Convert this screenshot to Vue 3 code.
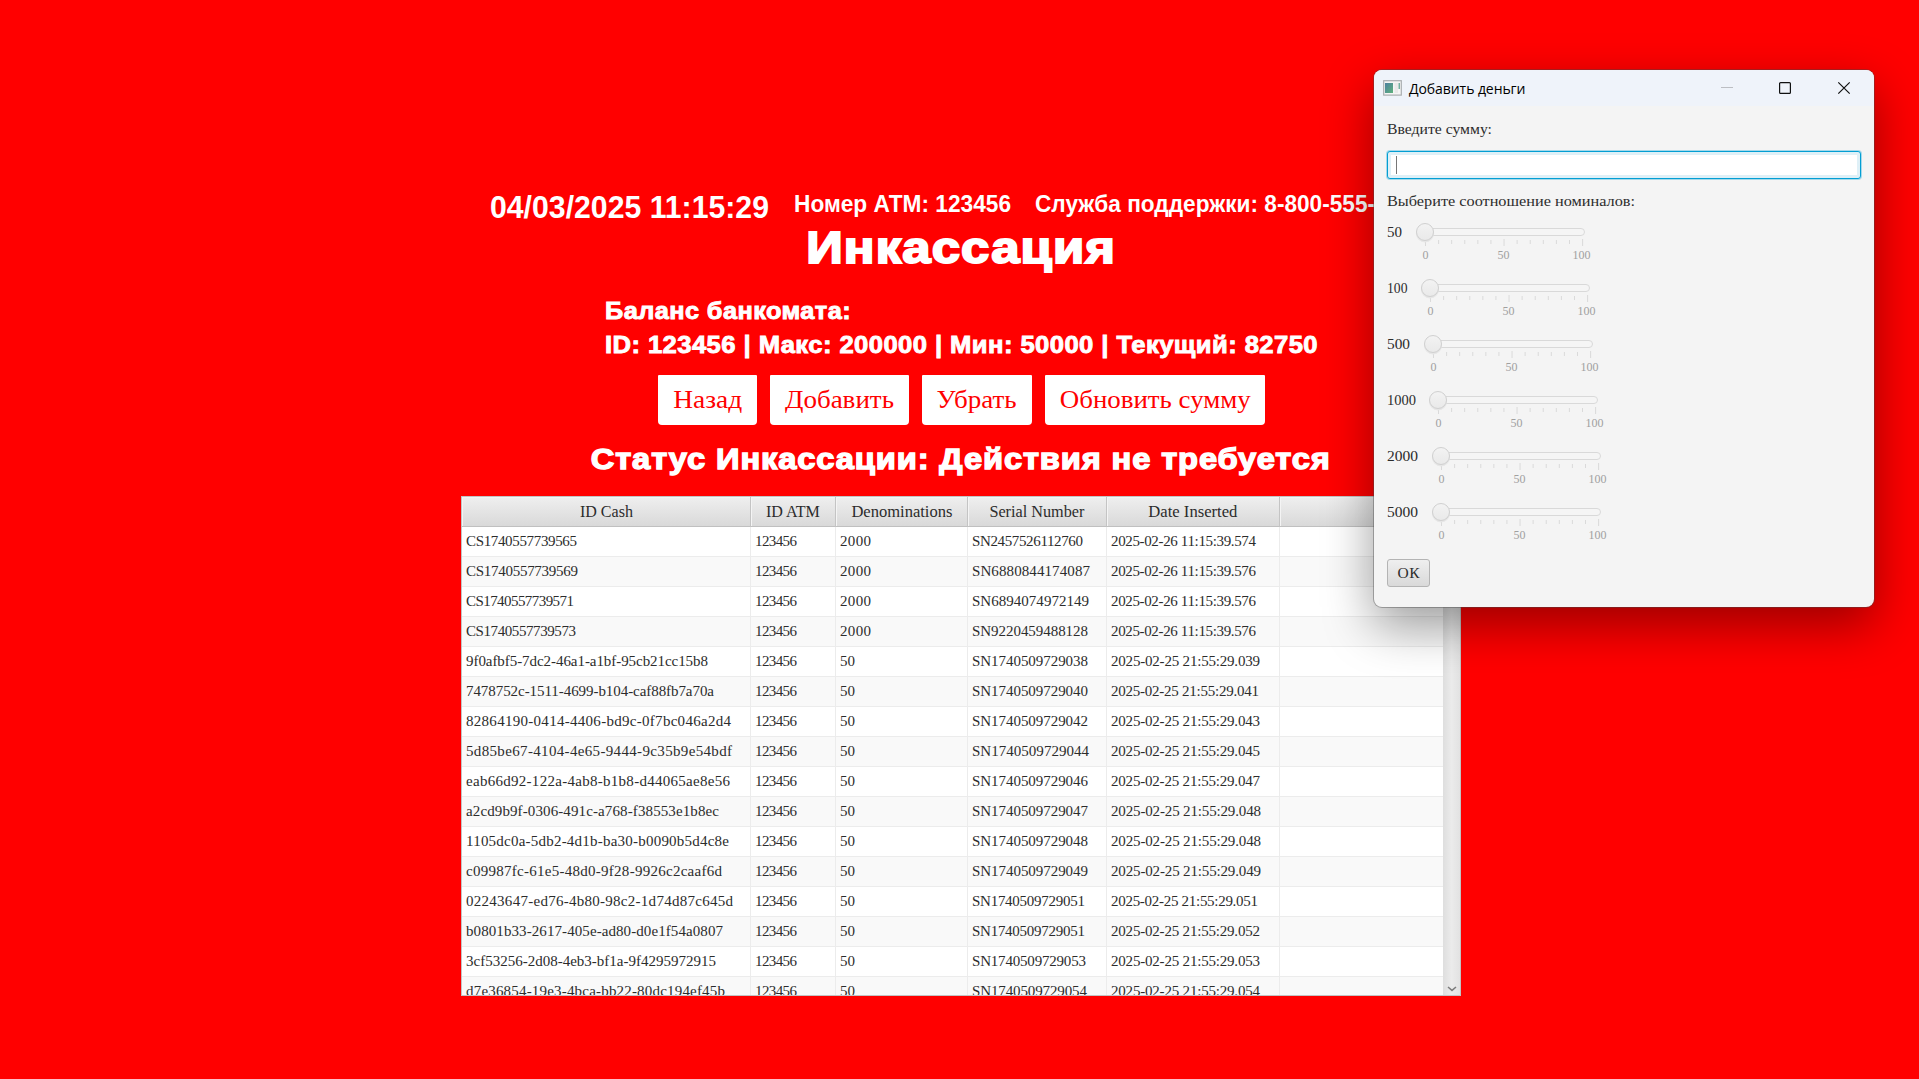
<script setup>
// Makes a run of text fill the given width: by tracking, or by
// horizontal scaling with the .stretch modifier.
const vFit = {
  mounted(el, { value, modifiers }) {
    const n = el.textContent.length
    if (!value || n < 2) return
    const w = el.getBoundingClientRect().width
    if (modifiers.stretch) {
      el.style.transform = `scaleX(${value / w})`
      return
    }
    el.style.letterSpacing = (value - w) / (n - 1) + 'px'
    el.style.marginRight = -(value - w) / (n - 1) + 'px'
  }
}

const actions = [
  { text: 'Назад', w: 99, t: 69 },
  { text: 'Добавить', w: 139, t: 109 },
  { text: 'Убрать', w: 110, t: 80 },
  { text: 'Обновить сумму', w: 220, t: 191 }
]

const columns = [
  { text: 'ID Cash', t: 53 },
  { text: 'ID ATM', t: 54 },
  { text: 'Denominations', t: 101 },
  { text: 'Serial Number', t: 95 },
  { text: 'Date Inserted', t: 89 },
  { text: '', t: 0 }
]

const rows = [
  ['CS1740557739565', 111, '2000', 'SN2457526112760', 111, '2025-02-26 11:15:39.574', 145],
  ['CS1740557739569', 112, '2000', 'SN6880844174087', 118, '2025-02-26 11:15:39.576', 145],
  ['CS1740557739571', 108, '2000', 'SN6894074972149', 117, '2025-02-26 11:15:39.576', 145],
  ['CS1740557739573', 110, '2000', 'SN9220459488128', 116, '2025-02-26 11:15:39.576', 145],
  ['9f0afbf5-7dc2-46a1-a1bf-95cb21cc15b8', 242, '50', 'SN1740509729038', 116, '2025-02-25 21:55:29.039', 149],
  ['7478752c-1511-4699-b104-caf88fb7a70a', 248, '50', 'SN1740509729040', 116, '2025-02-25 21:55:29.041', 148],
  ['82864190-0414-4406-bd9c-0f7bc046a2d4', 265, '50', 'SN1740509729042', 116, '2025-02-25 21:55:29.043', 149],
  ['5d85be67-4104-4e65-9444-9c35b9e54bdf', 266, '50', 'SN1740509729044', 117, '2025-02-25 21:55:29.045', 149],
  ['eab66d92-122a-4ab8-b1b8-d44065ae8e56', 264, '50', 'SN1740509729046', 116, '2025-02-25 21:55:29.047', 149],
  ['a2cd9b9f-0306-491c-a768-f38553e1b8ec', 253, '50', 'SN1740509729047', 116, '2025-02-25 21:55:29.048', 150],
  ['1105dc0a-5db2-4d1b-ba30-b0090b5d4c8e', 263, '50', 'SN1740509729048', 116, '2025-02-25 21:55:29.048', 150],
  ['c09987fc-61e5-48d0-9f28-9926c2caaf6d', 256, '50', 'SN1740509729049', 116, '2025-02-25 21:55:29.049', 150],
  ['02243647-ed76-4b80-98c2-1d74d87c645d', 267, '50', 'SN1740509729051', 113, '2025-02-25 21:55:29.051', 147],
  ['b0801b33-2617-405e-ad80-d0e1f54a0807', 257, '50', 'SN1740509729051', 113, '2025-02-25 21:55:29.052', 149],
  ['3cf53256-2d08-4eb3-bf1a-9f4295972915', 250, '50', 'SN1740509729053', 114, '2025-02-25 21:55:29.053', 149],
  ['d7e36854-19e3-4bca-bb22-80dc194ef45b', 259, '50', 'SN1740509729054', 115, '2025-02-25 21:55:29.054', 149]
]

const sliders = [
  { name: '50', w: 26, t: 15 },
  { name: '100', w: 31, t: 20.5 },
  { name: '500', w: 34, t: 23 },
  { name: '1000', w: 39, t: 29 },
  { name: '2000', w: 42, t: 31 },
  { name: '5000', w: 42, t: 31 }
]

const ticks = Array.from({ length: 13 }, (_, i) => ({
  x: 12.5 + i * 13.09,
  end: i % 6 === 0 ? 26 : 24,
  start: i % 6 === 0 ? 19 : 20
}))
</script>

<template>
  <div class="screen">
    <main class="atm">
      <div class="info">
        <span class="clock"><span v-fit.stretch="279">04/03/2025 11:15:29</span></span>
        <span class="number"><span v-fit.stretch="217">Номер АТМ: 123456</span></span>
        <span class="support"><span v-fit.stretch="340">Служба поддержки: 8-800-555-</span></span>
      </div>

      <h1><span v-fit.stretch="310">Инкассация</span></h1>

      <div class="balance">
        <div><span v-fit.stretch="246">Баланс банкомата:</span></div>
        <div><span v-fit.stretch="713">ID: 123456 | Макс: 200000 | Мин: 50000 | Текущий: 82750</span></div>
      </div>

      <div class="actions">
        <button v-for="a in actions" :key="a.text" :style="{ width: a.w + 'px' }">
          <span v-fit.stretch="a.t">{{ a.text }}</span>
        </button>
      </div>

      <h2><span v-fit.stretch="740">Статус Инкассации: Действия не требуется</span></h2>

      <div class="table">
        <div class="grid head">
          <div v-for="c in columns" :key="c.text"><span v-fit.stretch="c.t">{{ c.text }}</span></div>
        </div>
        <div class="view">
          <div class="rows">
            <div v-for="r in rows" :key="r[0]" class="grid row">
              <div><span v-fit="r[1]">{{ r[0] }}</span></div>
              <div><span v-fit="42">123456</span></div>
              <div><span v-fit="r[2] === '50' ? 15 : 31">{{ r[2] }}</span></div>
              <div><span v-fit="r[4]">{{ r[3] }}</span></div>
              <div><span v-fit="r[6]">{{ r[5] }}</span></div>
              <div></div>
            </div>
          </div>
          <div class="scrollbar">
            <svg width="10" height="6" viewBox="0 0 10 6">
              <path d="M1 1 L5 4.4 L9 1" fill="none" stroke="#7d7d7d" stroke-width="1.5" />
            </svg>
          </div>
        </div>
      </div>
    </main>

    <section class="dialog">
      <header class="titlebar">
        <svg class="app-icon" width="19" height="16" viewBox="0 0 19 16">
          <defs>
            <linearGradient id="pane" x1="0" y1="0" x2="1" y2="1">
              <stop offset="0" stop-color="#4c7fa0" />
              <stop offset="1" stop-color="#5fb27c" />
            </linearGradient>
          </defs>
          <rect x=".7" y=".7" width="17.6" height="14.4" fill="#f5f5f5" stroke="#a9adb0" stroke-width="1.2" />
          <rect x="2" y="3" width="8" height="10" fill="url(#pane)" />
          <rect x="11.5" y="3" width="3.5" height="10" fill="#e9e9e9" />
          <rect x="15.6" y="3" width="1.2" height="6" fill="#55a08c" />
        </svg>
        <span class="caption"><span v-fit="116.5">Добавить деньги</span></span>
        <svg class="controls" width="132" height="16" viewBox="0 0 132 16" fill="none">
          <path d="M1 7.5H13" stroke="#bcbec3" />
          <rect x="59.6" y="2.6" width="10.8" height="10.8" rx="1" stroke="#111" stroke-width="1.2" />
          <path d="M118.3 2.3 L129.7 13.7 M129.7 2.3 L118.3 13.7" stroke="#111" stroke-width="1.2" />
        </svg>
      </header>
      <div class="body">
        <div class="label"><span v-fit.stretch="105">Введите сумму:</span></div>
        <div class="field"><i class="caret"></i></div>
        <div class="label"><span v-fit.stretch="248">Выберите соотношение номиналов:</span></div>
        <div class="sliders">
          <div v-for="s in sliders" :key="s.name" class="slider">
            <div class="name" :style="{ width: s.w + 'px' }"><span v-fit.stretch="s.t">{{ s.name }}</span></div>
            <svg width="190" height="48" viewBox="0 0 190 48">
              <defs>
                <linearGradient id="thumb" x1="0" y1="0" x2="0" y2="1">
                  <stop offset="0" stop-color="#f3f3f3" />
                  <stop offset="1" stop-color="#e9e9e9" />
                </linearGradient>
              </defs>
              <rect x="9" y="8.5" width="162.5" height="7" rx="3.5" fill="#f5f5f5" stroke="#d9d9d9" />
              <path
                v-for="t in ticks"
                :key="t.x"
                :d="`M${t.x} ${t.start}V${t.end}`"
                stroke="#dadada"
              />
              <circle cx="12" cy="13.5" r="9" fill="#e6e6e6" />
              <circle cx="12" cy="12" r="8.5" fill="url(#thumb)" stroke="#d0d0d0" />
              <text x="12.5" y="38.5">0</text>
              <text x="90.5" y="38.5">50</text>
              <text x="168.5" y="38.5" textLength="18">100</text>
            </svg>
          </div>
        </div>
        <button class="ok"><span v-fit="22">ОК</span></button>
      </div>
    </section>
  </div>
</template>

<style>
body {
  margin: 0;
  background: #f00;
}
</style>

<style scoped>
.screen {
  position: relative;
  width: 1919px;
  height: 1079px;
  overflow: hidden;
  background: #f00;
  color: #2c2c2c;
  font: 15px 'Liberation Serif', serif;
}
.screen span {
  display: inline-block;
  white-space: nowrap;
}
.atm {
  width: 1000px;
  margin-left: 461px;
  padding-top: 190px;
}
.info {
  display: flex;
  align-items: flex-start;
  height: 30px;
  padding-left: 29px;
  color: #fff;
  font: bold 24px/28px 'Liberation Sans', Arial, sans-serif;
}
.info span,
.balance span,
.label span,
.name span {
  transform-origin: left;
}
.clock {
  width: 304px;
  font-size: 31px;
  line-height: 35px;
}
.number {
  width: 241px;
}
h1,
h2,
.balance {
  color: #fff;
  font-family: 'Liberation Sans', Arial, sans-serif;
  font-weight: bold;
}
h1 {
  margin: 0;
  font-size: 45px;
  line-height: 56px;
  height: 54px;
  text-align: center;
  letter-spacing: 1px;
  -webkit-text-stroke: 2px #fff;
}
.balance {
  margin: 20px 0 13px 144px;
  font-size: 24px;
  line-height: 34px;
  letter-spacing: 0.4px;
  -webkit-text-stroke: 0.9px #fff;
}
.actions {
  display: flex;
  gap: 13px;
  margin-left: 197px;
}
.actions button {
  height: 50px;
  padding: 0;
  border: 0;
  border-radius: 1px 1px 4px 4px;
  background: #fff;
  color: #f00;
  font: 26px 'Liberation Serif', serif;
}
h2 {
  margin: 14px 0 17px;
  font-size: 30px;
  line-height: 40px;
  text-align: center;
  letter-spacing: 0.8px;
  -webkit-text-stroke: 1.4px #fff;
}
.table {
  box-sizing: border-box;
  height: 500px;
  display: flex;
  flex-direction: column;
  border: 1px solid #c3c3c3;
  background: #fff;
}
.grid {
  display: grid;
  grid-template-columns: 289px 85px 132px 139px 173px 1fr;
}
.head > div {
  box-sizing: border-box;
  height: 30px;
  line-height: 30px;
  font-size: 16px;
  text-align: center;
  border-right: 1px solid #c4c4c4;
  border-bottom: 1px solid #c0c0c0;
  background: linear-gradient(#efefef, #d9d9d9);
  box-shadow: inset 1px 1px 0 #f4f4f4;
}
.head > div:last-child {
  border-right: 0;
}
.view {
  flex: 1;
  min-height: 0;
  display: flex;
  overflow: hidden;
}
.rows {
  flex: 1;
}
.row > div {
  box-sizing: border-box;
  height: 30px;
  padding-left: 4px;
  line-height: 29px;
  border-right: 1px solid #ececec;
  border-bottom: 1px solid #ececec;
}
.row > div:last-child {
  border-right: 0;
}
.row:nth-child(even) {
  background: #f9f9f9;
}
.scrollbar {
  width: 17px;
  display: flex;
  align-items: flex-end;
  justify-content: center;
  padding-bottom: 3px;
  box-sizing: border-box;
  background: linear-gradient(90deg, #dedede, #ebebeb 50%, #e2e2e2);
}
.dialog {
  position: absolute;
  left: 1374px;
  top: 70px;
  width: 500px;
  height: 537px;
  border-radius: 8px;
  overflow: hidden;
  background: #f4f4f4;
  box-shadow: 0 0 0 1px rgba(70, 70, 70, 0.4), 0 18px 50px rgba(0, 0, 0, 0.4);
}
.titlebar {
  display: flex;
  align-items: center;
  height: 36px;
  padding-left: 9px;
  background: #eff3fa;
}
.caption {
  margin: 0 auto 0 7px;
  color: #000;
  font: 14px 'Open Sans', 'Noto Sans', sans-serif;
}
.controls {
  margin-right: 22px;
}
.body {
  padding: 13px 13px 0;
}
.label {
  height: 20px;
  font-size: 15.5px;
  line-height: 20px;
}
.field {
  box-sizing: border-box;
  height: 28px;
  margin: 12px 0;
  padding: 4px 8px;
  border: 1px solid #039ed3;
  border-radius: 3px;
  background: #fff;
  box-shadow: 0 0 0 1px #a6d9ea, inset 0 0 0 3px #dff0f7;
}
.caret {
  display: block;
  width: 1px;
  height: 18px;
  background: #777;
}
.sliders {
  margin-top: 9px;
}
.slider {
  display: flex;
  height: 56px;
}
.name {
  font-size: 14px;
  line-height: 26px;
}
.slider text {
  fill: #a0a0a0;
  font: 12px 'Liberation Serif', serif;
  text-anchor: middle;
}
.ok {
  width: 43px;
  height: 28px;
  margin-top: 3px;
  padding: 0;
  display: block;
  border: 1px solid #b4b4b4;
  border-radius: 3px;
  background: linear-gradient(#efefef, #d9d9d9);
  color: #2c2c2c;
  font: 15.5px 'Liberation Serif', serif;
}
</style>
